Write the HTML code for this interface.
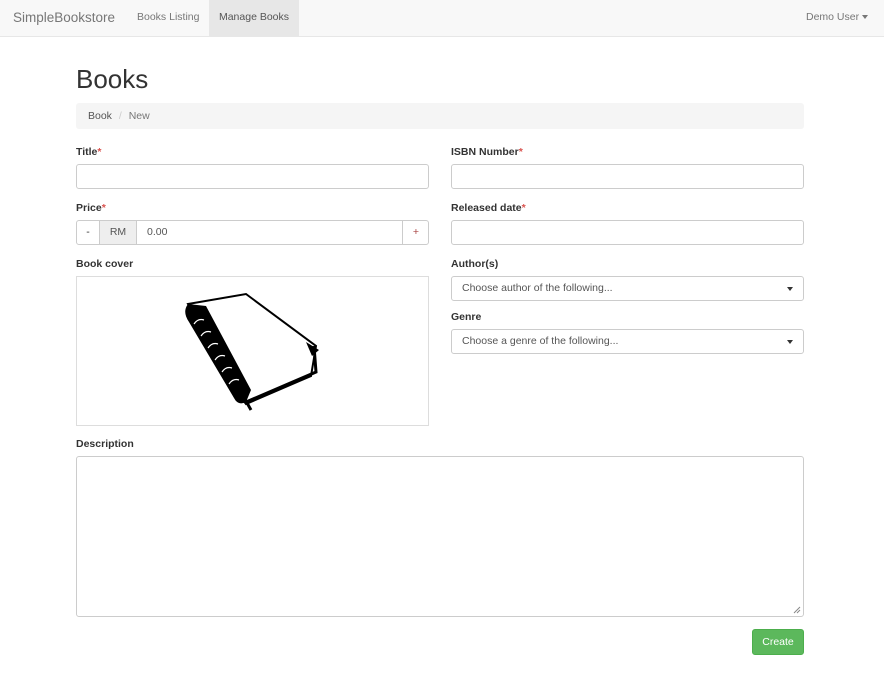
<!DOCTYPE html>
<html><head><meta charset="utf-8"><style>
*{box-sizing:border-box}
body{margin:0;width:884px;height:683px;background:#fff;font-family:"Liberation Sans",sans-serif;font-size:10.5px;color:#333;position:relative;overflow:hidden}
.nav{position:absolute;left:0;top:0;width:884px;height:37px;background:#f8f8f8;border-bottom:1px solid #e7e7e7}
.nav span{position:absolute;top:0;line-height:35px;color:#777}
.abs{position:absolute}
label.l{position:absolute;font-weight:bold;font-size:10.5px;color:#333}
label.l i{color:#d9534f;font-style:normal}
.in{position:absolute;border:1px solid #ccc;border-radius:3px;height:25px;background:#fff}
.sel{position:absolute;border:1px solid #ccc;border-radius:3px;height:25px;background:#fff;padding-left:10px;line-height:23px;color:#555}
.sel:after{content:"";position:absolute;right:10px;top:10px;border-left:3px solid transparent;border-right:3px solid transparent;border-top:4px solid #333}
</style></head><body>
<div class="nav">
<span style="left:13px;font-size:13.5px">SimpleBookstore</span>
<span style="left:137px;font-size:10.5px">Books Listing</span>
<span style="left:209px;width:90px;height:36px;background:#e7e7e7;color:#555;text-align:center;font-size:10.5px">Manage Books</span>
<span style="left:806px;font-size:10.5px">Demo User <span style="position:static;display:inline-block;border-left:3px solid transparent;border-right:3px solid transparent;border-top:4px solid #777;vertical-align:middle"></span></span>
</div>
<div class="abs" style="left:76px;top:64px;font-size:26px;color:#333">Books</div>
<div class="abs" style="left:76px;top:103px;width:728px;height:26px;background:#f5f5f5;border-radius:3px;line-height:26px;padding-left:12px;color:#555">Book <span style="color:#ccc;padding:0 4px">/</span> <span style="color:#777">New</span></div>

<label class="l" style="left:76px;top:146px">Title<i>*</i></label>
<div class="in" style="left:76px;top:164px;width:353px"></div>
<label class="l" style="left:451px;top:146px">ISBN Number<i>*</i></label>
<div class="in" style="left:451px;top:164px;width:353px"></div>

<label class="l" style="left:76px;top:202px">Price<i>*</i></label>
<div class="in" style="left:76px;top:220px;width:353px;overflow:hidden">
 <div class="abs" style="left:0;top:0;width:23px;height:23px;text-align:center;line-height:23px;color:#333;border-right:1px solid #ccc">-</div>
 <div class="abs" style="left:23px;top:0;width:37px;height:23px;background:#eee;text-align:center;line-height:23px;color:#555;border-right:1px solid #ccc">RM</div>
 <div class="abs" style="left:70px;top:0;line-height:23px;color:#555">0.00</div>
 <div class="abs" style="left:325px;top:0;width:27px;height:23px;border-left:1px solid #ccc;text-align:center;line-height:23px;color:#a94442">+</div>
</div>
<label class="l" style="left:451px;top:202px">Released date<i>*</i></label>
<div class="in" style="left:451px;top:220px;width:353px"></div>

<label class="l" style="left:76px;top:258px">Book cover</label>
<div class="abs" style="left:76px;top:276px;width:353px;height:150px;border:1px solid #ddd">
<svg width="353" height="150" style="position:absolute;left:-1px;top:-1px">
 <path d="M112 28 L170 18 L240 70 L235 100 L170 128 L160 115 Z" fill="#fff" stroke="#000" stroke-width="2"/>
 <path d="M112 28 Q106 36 113 46 L158 122 Q162 130 170 126 L175 114 L130 30 Z" fill="#000"/>
 <g stroke="#fff" stroke-width="1.2" fill="none">
  <path d="M118 48 Q122 42 128 44"/><path d="M125 60 Q129 54 135 56"/><path d="M132 72 Q136 66 142 68"/>
  <path d="M139 84 Q143 78 149 80"/><path d="M146 96 Q150 90 156 92"/><path d="M153 108 Q157 102 163 104"/>
 </g>
 <path d="M170 126 L240 96 L238 70" fill="none" stroke="#000" stroke-width="3"/>
 <path d="M166 118 L175 134" stroke="#000" stroke-width="3"/>
 <path d="M230 66 L243 74 L236 80 Z" fill="#000"/>
</svg></div>

<label class="l" style="left:451px;top:258px">Author(s)</label>
<div class="sel" style="left:451px;top:276px;width:353px">Choose author of the following...</div>
<label class="l" style="left:451px;top:311px">Genre</label>
<div class="sel" style="left:451px;top:329px;width:353px">Choose a genre of the following...</div>

<label class="l" style="left:76px;top:438px">Description</label>
<div class="in" style="left:76px;top:456px;width:728px;height:161px">
<svg width="8" height="8" style="position:absolute;right:2px;bottom:2px"><path d="M7 1L1 7M7 4L4 7" stroke="#888" stroke-width="1"/></svg>
</div>
<div class="abs" style="left:752px;top:629px;width:52px;height:26px;background:#5cb85c;border:1px solid #4cae4c;border-radius:3px;color:#fff;text-align:center;line-height:24px">Create</div>
</body></html>
